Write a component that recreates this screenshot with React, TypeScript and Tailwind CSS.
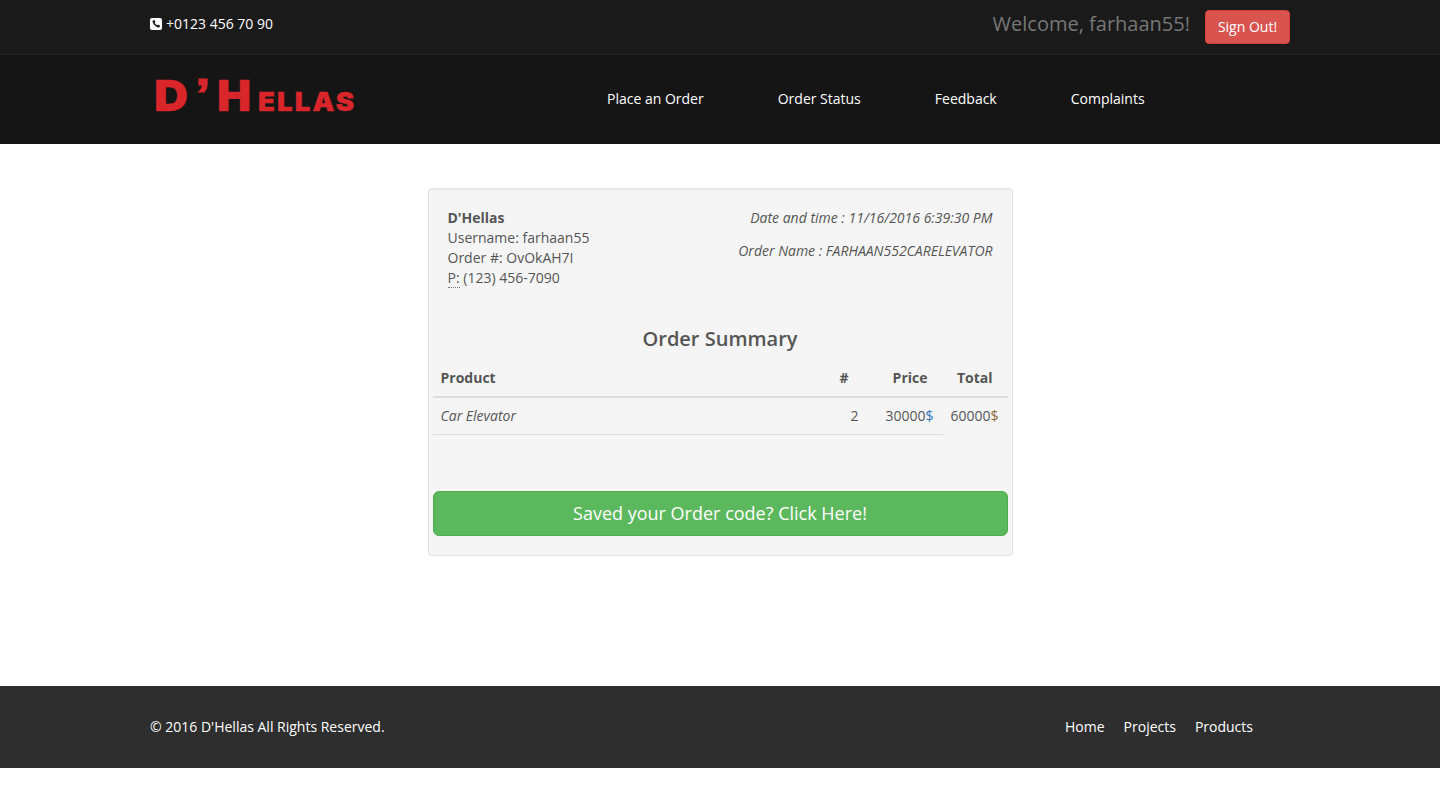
export default function App() {
  const sans = "font-['Open_Sans',sans-serif]";
  return (
    <div className={`${sans} text-sm leading-5 text-[#555] bg-white min-h-[794px]`}>
      <div className="h-[55px] bg-[#1a1a1a] border-b border-[#222] px-[150px] flex items-start justify-between">
        <div className="flex items-center gap-1 pt-[14px] text-white">
          <svg width="12" height="12" viewBox="0 0 12 12" className="shrink-0">
            <rect width="12" height="12" rx="2" fill="#fff" />
            <path d="M3.1 2.4 4.5 2l1 2-.8.8c.4 1 1.4 2 2.5 2.5l.8-.8 2 1-.4 1.4c-.2.5-.7.7-1.2.6C5.8 9.100 3 6.300 2.500 3.600c-.1-.5.100-1 .6-1.200z" fill="#1a1a1a" />
          </svg>
          <span>+0123 456 70 90</span>
        </div>
        <div className="flex items-start gap-[15px] pt-[10px]">
          <span className="text-xl leading-[27px] text-[#777]">Welcome, farhaan55!</span>
          <button className="h-[34px] w-[85px] rounded bg-[#d9534f] border border-[#d43f3a] text-white text-sm">Sign Out!</button>
        </div>
      </div>
      <div className="h-[89px] bg-[#151515] pl-[150px] flex items-start">
        <div className="w-[457px] pt-[17px] pl-[4px] font-['Inter',sans-serif] font-black text-[#d9262b] leading-none flex items-baseline whitespace-nowrap [-webkit-text-stroke:0.4px_#d9262b]">
          <span className="inline-block w-[41px] text-[42px] origin-left scale-x-[1.12]">D</span>
          <span className="inline-block w-[22px] text-[46px] origin-left font-['Liberation_Sans',sans-serif] font-bold scale-x-[1.25] [-webkit-text-stroke:1px_#d9262b]">’</span>
          <span className="inline-block w-[41px] text-[42px] origin-left scale-x-[1.08]">H</span>
          <span className="inline-block text-[26px] tracking-[2px] origin-left scale-x-[1.06]">ELLAS</span>
        </div>
        <nav className="flex gap-[74px] pt-[34px] text-white">
          <span>Place an Order</span>
          <span>Order Status</span>
          <span>Feedback</span>
          <span>Complaints</span>
        </nav>
      </div>
      <main className="h-[542px] pt-[44px]">
        <div className="w-[585px] h-[368px] mx-auto bg-[#f5f5f5] border border-[#e3e3e3] rounded px-1 pt-[19px] shadow-[inset_0_1px_1px_rgba(0,0,0,0.05)]">
          <div className="flex justify-between px-[15px]">
            <div>
              <div className="font-bold">D'Hellas</div>
              <div>Username: farhaan55</div>
              <div>Order #: OvOkAH7I</div>
              <div><span className="border-b border-dotted border-[#777]">P:</span> (123) 456-7090</div>
            </div>
            <div className="italic text-right">
              <div className="mb-[13px]">Date and time : 11/16/2016 6:39:30 PM</div>
              <div>Order Name : FARHAAN552CARELEVATOR</div>
            </div>
          </div>
          <h2 className="text-xl leading-[22px] font-semibold text-center mt-[40px] mb-[10px]">Order Summary</h2>
          <table className="w-[575px] table-fixed border-collapse">
            <thead>
              <tr className="border-b-2 border-[#ddd] font-bold">
                <th className="w-[404px] text-left px-2 h-[37px] pb-[1px]">Product</th>
                <th className="w-[40px] text-left px-0 pl-[3px] pb-[1px]">#</th>
                <th className="w-[66px] text-right pr-[15px] pb-[1px]">Price</th>
                <th className="text-right pr-[15px] pb-[1px]">Total</th>
              </tr>
            </thead>
            <tbody>
              <tr>
                <td className="italic px-2 h-[37px] border-b border-[#ddd]">Car Elevator</td>
                <td className="text-left pl-[14px] border-b border-[#ddd]">2</td>
                <td className="text-right pr-[9px] border-b border-[#ddd]">30000<span className="text-[#337ab7]">$</span></td>
                <td className="text-right pr-[9px]">60000<span className="text-[#8a6d3b]">$</span></td>
              </tr>
            </tbody>
          </table>
          <button className="mt-[56px] w-[575px] h-[45px] rounded-md bg-[#5cb85c] border border-[#4cae4c] text-white text-lg">Saved your Order code? Click Here!</button>
        </div>
      </main>
      <footer className="h-[82px] bg-[#2e2e2e] pl-[150px] pr-[187px] flex items-center justify-between text-white">
        <span>© 2016 D'Hellas All Rights Reserved.</span>
        <div className="flex gap-[19px]">
          <span>Home</span>
          <span>Projects</span>
          <span>Products</span>
        </div>
      </footer>
    </div>
  );
}
